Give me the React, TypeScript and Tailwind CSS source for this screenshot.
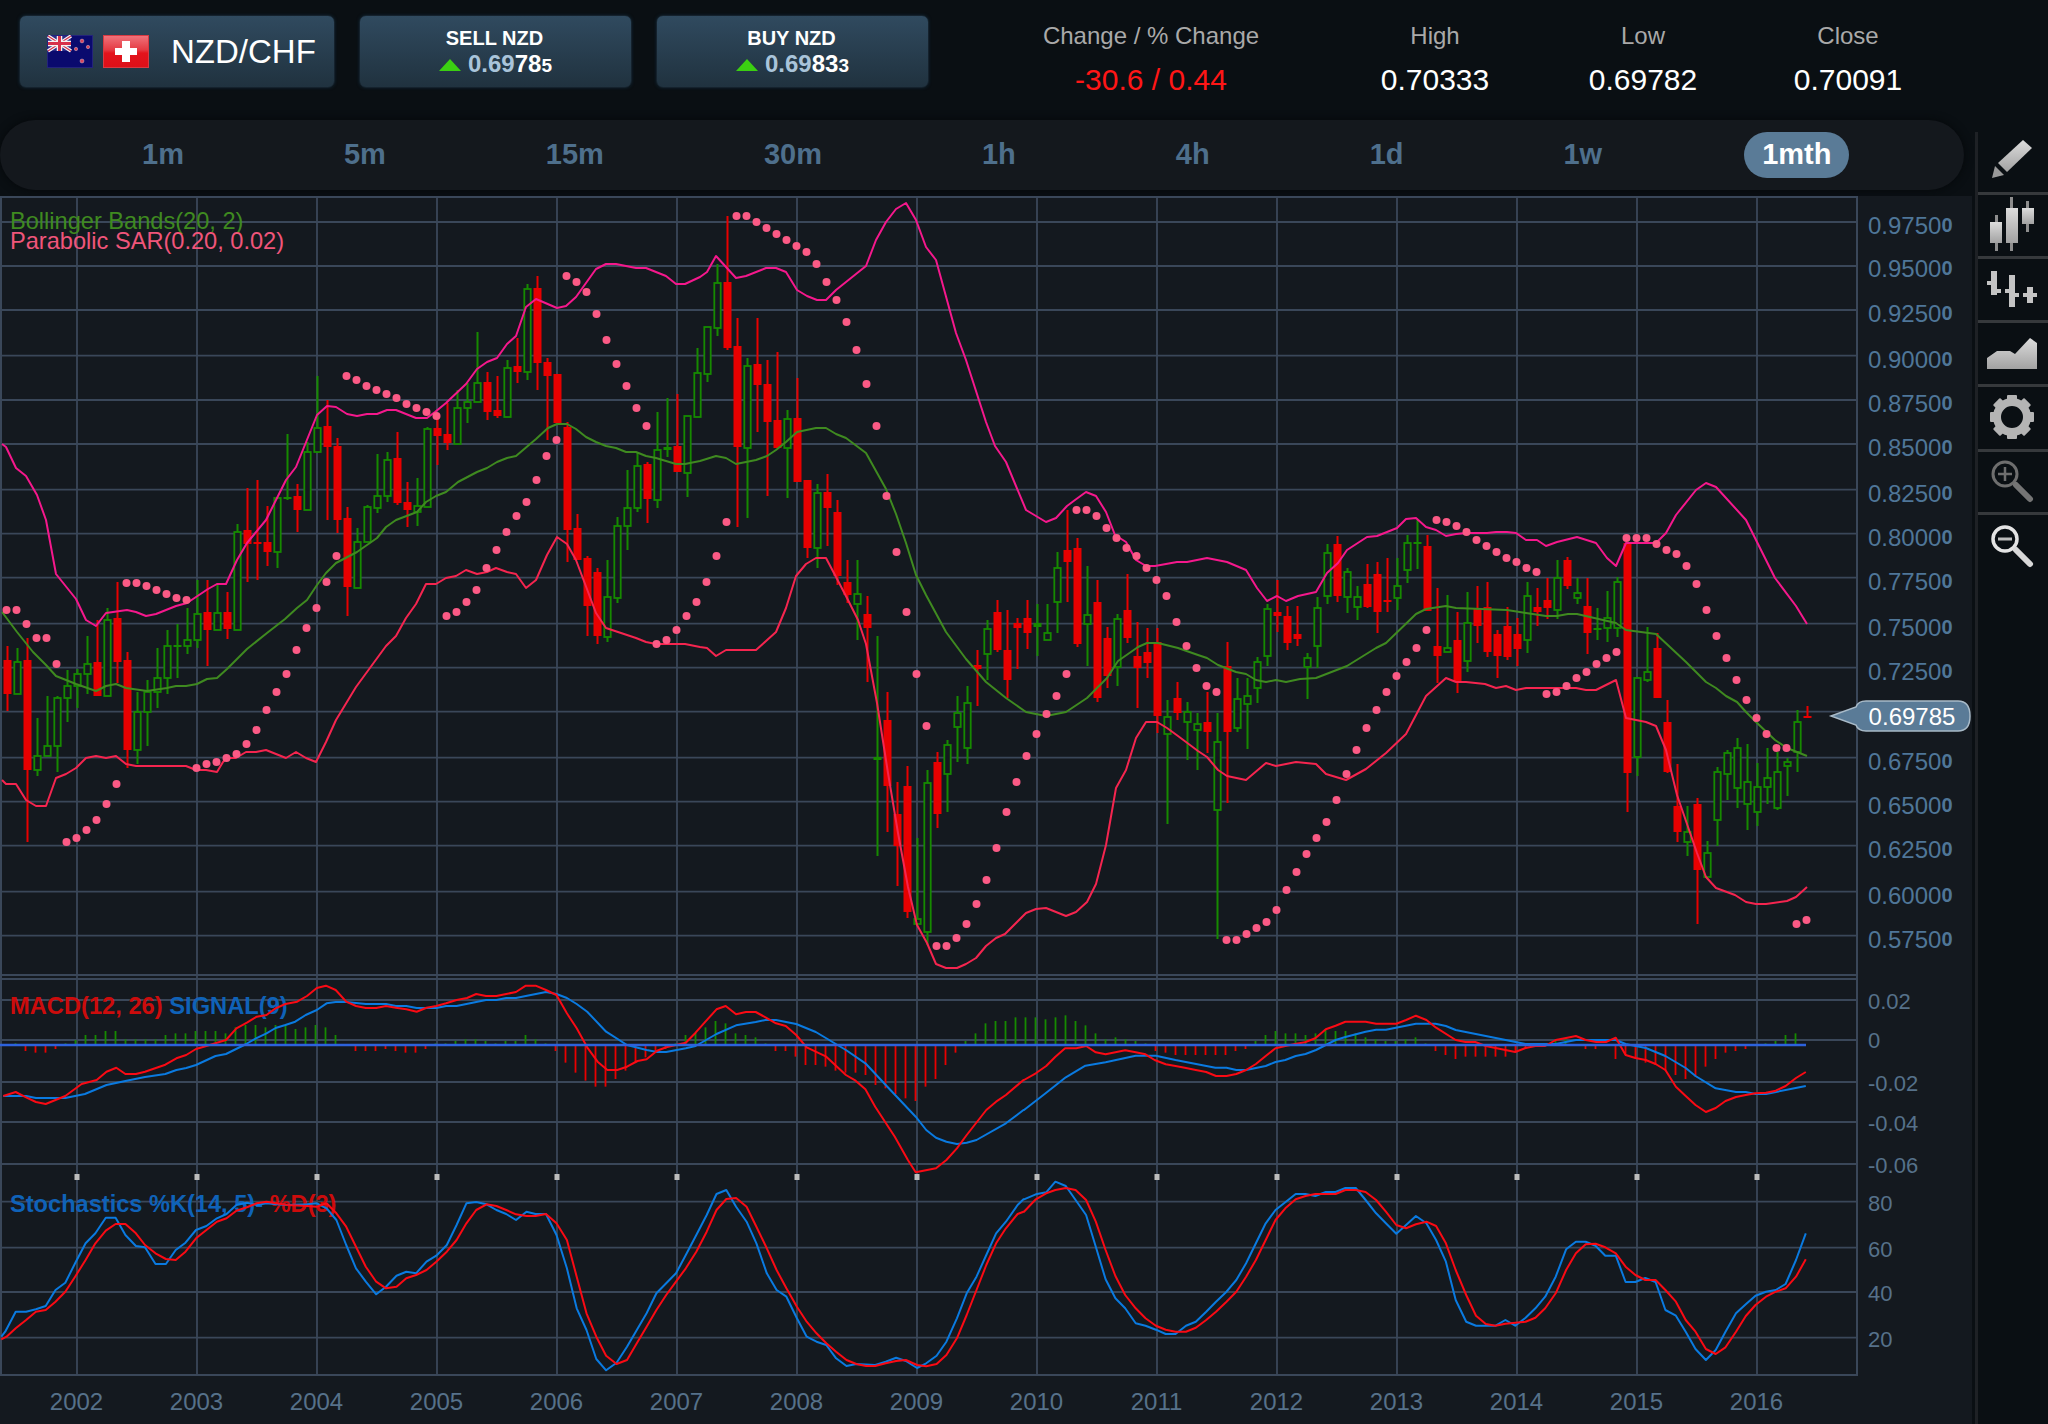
import React from "react";

type P = [number, number];
const r = 0, g = 1, dg = 2, dr = 3;
// type, wick top, body top, body bottom, wick bottom
const CANDLES: number[][] = [
[r,646,660,694,711],[g,648,662,694,694],[r,638,660,770,842],[g,718,756,770,776],[g,696,746,756,756],[g,696,698,746,772],[g,670,686,698,722],[g,669,674,686,708],[g,636,664,674,694],[r,620,662,696,696],
[g,608,620,696,696],[r,582,618,662,683],[r,652,660,750,768],[g,692,712,750,764],[g,680,692,712,746],[g,648,678,692,708],[g,630,646,678,694],[dg,624,645,647,678],[g,608,640,646,654],[g,580,614,640,648],
[r,580,612,630,666],[g,583,613,630,630],[r,592,612,629,639],[g,524,532,630,630],[r,488,530,544,582],[dr,480,542,544,580],[r,506,542,552,566],[g,498,498,552,568],[dg,434,497,499,500],[r,484,496,510,532],
[g,442,452,510,510],[g,376,428,452,453],[r,400,426,447,520],[r,438,446,520,533],[r,507,518,587,616],[g,528,542,588,588],[g,505,507,542,542],[g,454,496,508,513],[g,452,460,496,502],[r,432,458,503,505],
[r,482,502,510,527],[g,478,506,512,526],[g,427,429,507,507],[r,418,428,436,465],[r,403,434,443,450],[g,390,408,444,444],[g,383,402,408,423],[g,332,383,402,402],[r,372,382,412,420],[r,376,410,416,418],
[g,360,368,417,417],[r,338,366,372,383],[g,284,289,372,380],[r,276,288,363,390],[r,358,362,376,440],[r,374,374,423,423],[r,422,427,530,562],[r,514,528,560,560],[r,556,558,606,636],[r,568,572,636,644],
[g,560,597,637,642],[g,517,526,598,603],[g,470,508,526,550],[g,453,466,508,512],[r,462,464,499,523],[g,412,450,500,508],[dg,398,447,450,457],[r,394,446,472,472],[g,416,416,473,497],[g,348,373,417,417],
[g,327,327,374,382],[g,264,283,328,336],[r,216,282,348,350],[r,318,346,447,527],[g,358,366,448,518],[r,318,364,385,432],[r,360,384,422,496],[r,352,420,448,448],[g,410,419,448,498],[r,378,418,482,482],
[r,480,480,548,558],[g,484,493,548,568],[r,474,492,508,546],[r,500,512,576,585],[r,560,582,595,603],[g,560,594,604,640],[r,596,614,628,682],[dg,636,757,760,856],[r,692,720,786,832],[r,782,814,846,886],
[r,766,786,912,918],[g,838,919,924,924],[g,770,783,932,945],[r,752,762,814,828],[g,740,745,774,812],[g,696,713,727,762],[g,686,703,748,764],[dr,650,665,669,706],[g,620,629,654,680],[r,600,612,650,652],
[r,610,650,680,698],[dr,618,623,628,669],[r,600,618,633,649],[dg,604,623,627,656],[g,604,633,640,640],[g,552,568,602,633],[r,510,550,562,602],[r,538,548,644,647],[g,566,615,624,666],[r,580,602,698,702],
[r,627,638,676,688],[g,614,619,667,686],[r,574,610,638,643],[r,622,656,668,708],[r,628,652,663,678],[r,628,642,716,733],[g,700,717,734,824],[r,682,698,713,720],[g,702,712,722,760],[g,713,724,730,770],
[r,692,722,732,753],[g,713,742,810,939],[r,642,666,732,803],[g,678,699,728,732],[g,678,696,704,749],[g,657,662,688,703],[g,604,609,656,666],[dr,580,612,616,632],[r,606,616,643,650],[r,606,634,639,646],
[g,653,658,667,699],[g,597,608,646,668],[g,544,553,596,604],[r,536,544,596,602],[g,568,572,597,613],[g,586,597,607,620],[r,564,584,607,608],[r,562,574,612,633],[dr,558,600,602,612],[g,558,586,598,610],
[g,535,543,570,583],[dg,520,542,544,569],[r,535,546,611,611],[r,588,646,656,683],[g,595,648,652,652],[r,612,640,682,693],[g,592,623,661,672],[r,586,609,626,643],[r,582,607,652,657],[r,630,634,656,678],
[r,607,626,657,660],[r,618,634,649,666],[g,582,596,640,653],[r,588,607,612,626],[r,578,600,608,619],[g,560,578,610,619],[r,557,560,586,589],[g,578,593,598,604],[r,578,606,633,654],[dg,608,628,630,640],
[g,591,618,628,642],[g,577,582,628,637],[r,543,543,773,812],[g,677,678,757,776],[g,627,672,680,682],[r,633,648,698,698],[r,700,722,772,773],[r,764,806,832,842],[g,806,832,842,856],[r,798,804,870,924],
[g,841,853,877,877],[g,767,772,820,846],[g,750,753,774,800],[g,738,748,788,808],[g,744,782,804,830],[g,763,787,812,826],[g,748,778,787,804],[g,752,772,808,810],[g,758,762,766,796],[g,710,722,752,772],
[dr,706,716,718,718],
];

const SAR = [610,610,624,638,638,664,842,838,830,820,804,784,583,583,586,590,594,598,600,768,764,762,758,754,744,730,710,692,674,650,628,608,582,556,376,380,386,390,394,398,404,408,412,416,616,612,602,590,568,550,532,516,502,480,456,440,276,282,292,314,340,364,386,408,426,644,640,630,616,602,582,556,522,216,216,222,228,234,240,246,252,264,282,300,322,350,384,426,496,552,612,674,726,946,946,938,924,904,880,848,812,782,756,734,714,696,674,510,510,516,528,538,548,556,568,580,596,622,646,668,686,692,940,940,934,928,922,910,890,872,854,838,822,800,774,750,728,710,692,676,662,648,630,520,522,526,532,540,546,552,558,562,568,572,694,692,686,678,672,664,658,652,538,538,538,544,550,554,566,584,610,636,658,680,700,718,734,748,748,924,920];

const UPPER: P[] = [[2,444],[6,447],[16,468],[26,476],[37,495],[46,520],[56,574],[76,599],[86,620],[96,626],[106,613],[127,610],[136,612],[146,616],[156,614],[176,606],[187,603],[208,589],[217,584],[226,584],[237,560],[247,543],[266,520],[286,480],[296,467],[317,415],[327,406],[336,407],[347,414],[357,416],[367,414],[377,414],[387,410],[396,410],[416,418],[427,418],[435,412],[446,403],[466,384],[477,369],[487,362],[497,358],[507,344],[516,336],[526,307],[536,299],[557,308],[566,306],[576,297],[596,269],[606,264],[616,264],[636,268],[646,268],[666,276],[676,284],[685,284],[700,277],[707,272],[716,256],[736,278],[746,276],[766,268],[776,268],[786,272],[797,290],[807,296],[817,300],[826,300],[836,290],[866,266],[876,240],[886,222],[896,209],[906,203],[916,220],[926,247],[936,260],[956,333],[966,360],[986,422],[995,446],[1006,462],[1026,510],[1046,522],[1056,518],[1067,506],[1075,500],[1086,492],[1096,496],[1106,512],[1115,535],[1126,542],[1136,560],[1146,566],[1155,566],[1177,562],[1187,562],[1207,558],[1227,562],[1246,570],[1257,588],[1267,601],[1277,596],[1286,601],[1298,596],[1316,592],[1327,573],[1338,563],[1347,550],[1367,537],[1377,536],[1397,528],[1406,519],[1416,518],[1426,527],[1436,530],[1446,536],[1456,534],[1466,533],[1487,533],[1496,532],[1507,532],[1516,533],[1526,540],[1537,540],[1546,546],[1557,542],[1577,537],[1596,543],[1607,558],[1616,566],[1626,543],[1656,543],[1666,533],[1676,515],[1696,490],[1706,483],[1716,487],[1746,520],[1775,578],[1796,606],[1807,624]];

const MIDDLE: P[] = [[2,612],[17,632],[33,652],[46,665],[56,676],[76,684],[96,691],[106,686],[116,684],[126,688],[147,691],[167,688],[176,686],[186,686],[197,684],[207,679],[217,678],[227,669],[247,649],[267,633],[285,619],[297,608],[307,600],[317,585],[326,573],[336,563],[357,552],[377,538],[386,527],[396,520],[417,512],[426,502],[436,496],[446,492],[458,482],[477,472],[487,468],[497,462],[507,458],[516,456],[536,439],[548,428],[557,424],[567,424],[576,429],[586,437],[596,442],[606,446],[616,448],[626,452],[636,452],[646,456],[656,458],[676,464],[685,464],[700,461],[716,456],[726,458],[736,464],[756,460],[767,456],[776,450],[786,442],[797,432],[816,428],[826,428],[836,434],[846,438],[866,453],[876,471],[886,489],[896,514],[906,543],[916,575],[926,595],[946,632],[966,659],[986,682],[1006,698],[1026,712],[1046,716],[1066,712],[1087,698],[1107,678],[1118,661],[1138,647],[1147,643],[1158,643],[1178,648],[1198,655],[1207,658],[1218,665],[1236,672],[1246,674],[1256,680],[1266,682],[1276,680],[1286,682],[1300,679],[1316,678],[1347,666],[1376,648],[1386,643],[1416,614],[1426,609],[1446,606],[1456,608],[1507,610],[1526,613],[1546,616],[1557,616],[1568,614],[1577,614],[1616,623],[1626,630],[1656,634],[1686,662],[1706,682],[1716,688],[1726,696],[1737,702],[1746,712],[1756,722],[1775,740],[1787,748],[1807,756]];

const LOWER: P[] = [[2,780],[6,784],[16,784],[26,800],[36,806],[46,806],[56,778],[66,774],[76,768],[86,758],[96,756],[106,758],[116,756],[126,764],[136,766],[186,766],[196,770],[206,770],[217,772],[223,762],[227,758],[236,758],[246,752],[256,752],[266,750],[286,758],[296,752],[306,758],[316,762],[326,742],[336,720],[356,687],[386,646],[396,636],[406,618],[416,604],[426,584],[436,584],[446,578],[456,576],[466,570],[477,574],[487,572],[496,568],[507,572],[516,574],[526,588],[536,580],[547,555],[557,537],[567,544],[576,560],[596,613],[606,628],[636,638],[646,642],[656,644],[685,644],[700,647],[707,648],[716,656],[726,650],[756,650],[776,632],[786,608],[796,576],[806,564],[816,558],[826,558],[836,577],[848,600],[858,620],[866,644],[877,703],[888,773],[898,833],[908,887],[917,925],[927,943],[936,964],[946,968],[957,968],[966,964],[976,958],[986,946],[996,938],[1005,934],[1026,913],[1036,909],[1046,908],[1066,916],[1076,912],[1087,902],[1096,884],[1106,845],[1116,788],[1126,770],[1136,738],[1146,722],[1157,722],[1167,728],[1178,736],[1198,751],[1207,757],[1218,770],[1227,776],[1246,780],[1266,763],[1276,766],[1296,762],[1316,764],[1326,774],[1346,780],[1366,769],[1386,753],[1406,734],[1426,696],[1446,678],[1456,682],[1466,682],[1485,684],[1496,688],[1506,686],[1516,690],[1526,688],[1576,688],[1586,690],[1596,690],[1616,680],[1626,718],[1646,722],[1656,726],[1666,750],[1677,795],[1697,853],[1706,877],[1716,888],[1735,895],[1746,902],[1756,904],[1766,904],[1787,901],[1796,897],[1807,887]];

const HIST = [258,250,273,278,278,267,250,240,225,225,213,213,238,238,238,238,225,220,220,213,213,213,220,202,195,195,202,195,195,207,202,195,202,225,258,273,273,273,267,273,278,278,267,250,250,243,238,238,243,250,243,243,225,238,250,273,308,338,362,380,380,357,332,308,292,278,267,250,225,218,202,183,190,220,225,232,250,273,273,290,315,315,320,332,338,338,345,375,385,402,415,423,380,357,315,278,243,220,190,183,183,172,172,172,178,172,166,183,196,220,238,232,238,243,250,273,278,285,285,285,285,285,285,273,267,243,225,213,220,220,225,220,207,213,213,220,232,238,243,243,238,232,250,273,285,297,290,290,290,290,290,273,267,250,250,243,238,258,267,267,258,297,285,297,308,315,332,345,357,350,320,297,278,273,267,258,250,243,225,220];

const z7 = (a: P[]): P[] => a.map(([x, y]) => [x / 1.531, 960 + y / 3]);
const z8 = (a: P[]): P[] => a.map(([x, y]) => [1024 + x / 1.531, 960 + y / 3]);

const MACD: P[] = [...z7([[5,408],[24,396],[40,412],[55,426],[70,432],[85,420],[100,408],[125,372],[148,360],[163,335],[178,323],[192,342],[208,342],[222,335],[253,314],[270,295],[285,285],[300,267],[316,258],[346,240],[362,205],[378,188],[393,170],[408,165],[422,145],[437,132],[455,125],[470,108],[485,84],[499,77],[514,90],[530,125],[545,138],[560,144],[576,144],[591,138],[606,143],[622,148],[638,155],[653,143],[668,138],[683,130],[699,120],[715,114],[729,102],[744,108],[760,108],[775,102],[790,96],[805,77],[820,77],[836,90],[852,105],[868,160],[883,205],[899,262],[915,305],[930,330],[945,330],[960,320],[976,303],[990,298],[1006,272],[1020,262],[1050,248],[1065,218],[1080,185],[1097,148],[1111,138],[1127,163],[1142,156],[1157,156],[1172,172],[1188,190],[1203,198],[1219,225],[1235,262],[1265,290],[1295,345],[1310,362],[1325,388],[1340,440],[1370,530],[1390,600],[1402,637],[1433,625],[1449,600],[1465,565],[1480,525],[1510,450],[1525,425],[1540,405],[1567,360]]),
...z8([[0,360],[18,340],[34,318],[48,290],[63,265],[80,265],[95,258],[110,277],[125,283],[140,277],[155,271],[171,277],[186,283],[200,300],[217,313],[232,318],[248,324],[263,330],[279,336],[294,348],[310,348],[325,342],[340,330],[355,312],[370,288],[385,265],[400,258],[415,252],[430,247],[446,235],[462,208],[477,197],[492,185],[523,185],[539,191],[570,191],[585,180],[600,167],[616,180],[631,203],[661,240],[676,246],[691,246],[707,258],[722,264],[737,270],[752,276],[768,264],[783,258],[798,258],[814,240],[830,234],[845,228],[860,240],[876,246],[891,246],[906,233],[921,285],[936,294],[952,300],[967,312],[982,330],[998,380],[1013,408],[1028,435],[1044,456],[1059,444],[1074,423],[1090,411],[1105,405],[1120,400],[1136,398],[1151,392],[1166,378],[1182,354],[1197,336]])];

const SIGNAL: P[] = [...z7([[5,408],[40,408],[55,414],[100,414],[130,402],[163,375],[192,363],[222,351],[253,342],[270,330],[285,324],[300,315],[330,288],[346,282],[377,252],[392,235],[408,220],[422,204],[437,195],[452,185],[468,165],[485,150],[500,130],[514,126],[530,126],[560,132],[591,132],[606,138],[622,138],[638,144],[668,144],[683,138],[699,138],[729,126],[744,120],[760,120],[775,114],[790,114],[805,108],[836,96],[852,102],[868,114],[883,132],[899,155],[928,215],[960,255],[990,270],[1006,276],[1020,276],[1050,265],[1065,258],[1097,222],[1127,196],[1157,186],[1172,180],[1188,180],[1219,192],[1249,216],[1295,270],[1325,310],[1356,375],[1402,470],[1418,510],[1433,533],[1449,545],[1465,552],[1480,548],[1495,540],[1540,490],[1567,450]]),
...z8([[0,450],[33,400],[64,352],[94,317],[125,307],[171,287],[202,287],[232,300],[293,323],[310,323],[325,330],[340,330],[370,318],[385,306],[400,300],[416,288],[431,282],[447,270],[477,240],[492,231],[523,215],[539,209],[554,209],[600,191],[630,191],[646,198],[661,210],[707,228],[768,252],[814,252],[845,240],[906,240],[921,252],[952,264],[982,288],[1013,324],[1028,348],[1059,385],[1090,396],[1105,396],[1120,402],[1136,402],[1197,378]])];

const STOCH_K: P[] = [...z7([[2,1130],[8,1115],[24,1055],[40,1055],[55,1048],[70,1038],[85,990],[100,968],[115,910],[131,850],[146,820],[162,773],[177,773],[192,825],[208,858],[222,862],[238,912],[254,912],[269,870],[284,848],[300,810],[316,798],[332,775],[347,762],[362,735],[378,728],[393,735],[408,730],[424,733],[440,735],[470,733],[485,730],[500,745],[515,780],[530,855],[545,925],[560,965],[576,1003],[591,980],[607,947],[622,935],[637,940],[653,905],[668,887],[684,855],[699,795],[714,730],[729,726],[745,733],[760,750],[775,762],[790,780],[806,755],[820,762],[836,762],[852,825],[868,925],[883,1045],[898,1110],[913,1197],[928,1231],[944,1208],[960,1160],[975,1110],[990,1060],[1005,1000],[1020,970],[1035,940],[1050,885],[1066,825],[1082,765],[1097,702],[1112,690],[1127,740],[1143,785],[1158,850],[1174,940],[1189,990],[1204,1010],[1220,1075],[1235,1130],[1250,1145],[1265,1155],[1280,1195],[1296,1218],[1311,1212],[1340,1215],[1356,1205],[1372,1193],[1387,1203],[1404,1224],[1418,1210],[1434,1187],[1449,1145],[1465,1075],[1480,1000],[1495,950],[1510,885],[1525,820],[1540,785],[1558,735],[1567,718]]),
...z8([[0,718],[18,703],[34,697],[48,665],[64,678],[79,720],[95,765],[110,860],[125,958],[140,1015],[155,1045],[171,1090],[186,1097],[202,1109],[217,1122],[232,1122],[248,1097],[263,1085],[279,1055],[294,1025],[310,995],[325,960],[340,910],[355,850],[370,790],[385,750],[400,727],[416,702],[431,702],[446,708],[462,696],[477,696],[492,684],[508,684],[523,720],[539,760],[554,790],[570,821],[585,795],[600,768],[616,790],[631,840],[646,905],[661,1020],[677,1085],[692,1097],[722,1097],[737,1080],[752,1097],[768,1073],[783,1045],[798,1010],[814,950],[830,868],[845,845],[860,845],[875,857],[890,887],[906,887],[921,966],[936,966],[951,954],[967,966],[982,1050],[998,1067],[1013,1115],[1028,1167],[1044,1200],[1059,1170],[1074,1115],[1090,1060],[1105,1033],[1120,1007],[1136,995],[1151,990],[1166,972],[1182,900],[1197,820]])];

const STOCH_D: P[] = [...z7([[2,1138],[10,1130],[24,1105],[40,1080],[55,1055],[70,1050],[85,1025],[100,995],[115,950],[131,900],[146,850],[162,812],[177,792],[192,792],[208,820],[222,855],[238,880],[254,897],[269,900],[284,875],[300,835],[316,810],[332,785],[347,775],[362,752],[378,742],[393,730],[408,725],[440,735],[470,738],[485,740],[500,730],[515,760],[530,800],[545,860],[560,920],[576,965],[591,985],[607,980],[622,955],[637,945],[653,930],[668,905],[684,875],[699,840],[714,790],[729,750],[745,733],[760,738],[775,750],[790,763],[806,768],[820,768],[836,762],[852,790],[868,840],[883,950],[898,1060],[913,1130],[928,1187],[944,1212],[960,1200],[975,1150],[990,1100],[1005,1050],[1020,1005],[1035,965],[1050,925],[1066,875],[1082,815],[1097,750],[1112,717],[1127,714],[1143,740],[1158,800],[1174,865],[1189,930],[1204,985],[1220,1040],[1235,1085],[1250,1120],[1265,1150],[1280,1175],[1296,1200],[1311,1212],[1326,1218],[1340,1218],[1356,1210],[1372,1203],[1387,1200],[1404,1215],[1418,1219],[1434,1212],[1449,1185],[1465,1135],[1480,1065],[1495,990],[1510,915],[1525,850],[1540,805],[1558,762],[1567,755]]),
...z8([[0,755],[18,718],[34,700],[48,690],[64,684],[79,690],[95,720],[110,785],[125,870],[140,948],[155,1005],[171,1045],[186,1075],[202,1097],[217,1109],[232,1115],[248,1115],[263,1103],[279,1080],[294,1055],[310,1025],[325,995],[340,950],[355,900],[370,840],[385,780],[400,745],[416,718],[431,708],[446,702],[477,702],[492,690],[508,690],[523,696],[539,720],[554,755],[570,795],[585,805],[600,793],[616,785],[631,798],[646,850],[661,930],[677,1005],[692,1067],[707,1092],[722,1097],[737,1091],[768,1085],[783,1073],[798,1045],[814,1000],[830,930],[845,880],[860,853],[875,851],[890,862],[906,880],[921,920],[936,945],[951,960],[967,960],[982,990],[998,1025],[1013,1080],[1028,1115],[1044,1167],[1059,1182],[1074,1162],[1090,1115],[1105,1068],[1120,1035],[1136,1010],[1151,995],[1166,985],[1182,950],[1197,898]])];

const HLINES = [222,266,310,355.7,400,444,489.7,533.7,577.7,623.7,667.7,711.7,757.7,801.7,845.7,891.7,935.7,975,979,1000,1040,1082,1122,1164,1201.7,1247.7,1292,1337.7];
const YEARS = Array.from({ length: 15 }, (_, k) => ({ year: 2002 + k, x: 77 + 120 * k }));
const PRICES: [string, number][] = [["0.9750",225],["0.9500",268],["0.9250",313],["0.9000",359],["0.8750",403],["0.8500",447],["0.8250",493],["0.8000",537],["0.7750",581],["0.7500",627],["0.7250",671],["0.6750",761],["0.6500",805],["0.6250",849],["0.6000",895],["0.5750",939]];
const SIDE: [string, number][] = [["0.02",1001],["0",1040],["-0.02",1083],["-0.04",1123],["-0.06",1165],["80",1203],["60",1249],["40",1293],["20",1339]];

const pts = (a: P[]) => a.map(([x, y]) => `${x.toFixed(1)},${y.toFixed(1)}`).join(" ");
const RED = "#e80000";
const GREEN = "#168a00";

function Candle({ c, i }: { c: number[]; i: number }) {
  const [t, wt, bt, bb, wb] = c;
  const x = 7.5 + 10 * i;
  const isRed = t === r || t === dr;
  const col = isRed ? RED : GREEN;
  return (
    <g>
      <line x1={x} x2={x} y1={wt} y2={wb} stroke={col} strokeWidth={2} />
      {t === g ? (
        <rect x={x - 3.2} y={bt} width={6.4} height={bb - bt} fill="#14191f" stroke={col} strokeWidth={1.8} />
      ) : (
        <rect x={x - 4} y={bt} width={8} height={Math.max(bb - bt, 2)} fill={col} />
      )}
    </g>
  );
}

function PriceChart() {
  return (
    <svg viewBox="0 196 1972 1228" className="block h-[1228px] w-[1972px] bg-[#14191f]">
      <g stroke="#3a4759" strokeWidth={1.8}>
        {HLINES.map((y) => <line key={y} x1={0} x2={1857} y1={y} y2={y} />)}
        {YEARS.map((v) => <line key={v.x} x1={v.x} x2={v.x} y1={196} y2={1375} />)}
        <rect x={1} y={197} width={1856} height={1178} fill="none" strokeWidth={2} />
      </g>

      <text x={10} y={221} fontSize={23.6} fill="#3f8a20" dominantBaseline="central">Bollinger Bands(20, 2)</text>
      <text x={10} y={241} fontSize={23.6} fill="#f0557a" dominantBaseline="central">Parabolic SAR(0.20, 0.02)</text>
      <text x={10} y={1006} fontSize={23.7} fontWeight={700} dominantBaseline="central">
        <tspan fill="#cc0c0c">MACD(12, 26) </tspan>
        <tspan fill="#0f62b8">SIGNAL(9)</tspan>
      </text>
      <text x={10} y={1204} fontSize={23.6} fontWeight={700} dominantBaseline="central">
        <tspan fill="#0f62b8">Stochastics %K(14, 5)- </tspan>
        <tspan fill="#cc0c0c">%D(3)</tspan>
      </text>

      {CANDLES.map((c, i) => <Candle key={i} c={c} i={i} />)}

      <g fill="none" strokeWidth={2} strokeLinejoin="round">
        <polyline points={pts(UPPER)} stroke="#f5188c" />
        <polyline points={pts(MIDDLE)} stroke="#3f8a20" />
        <polyline points={pts(LOWER)} stroke="#f5254f" />
      </g>
      {SAR.map((y, k) => <ellipse key={k} cx={6.5 + 10 * k} cy={y} rx={4} ry={4} fill="#fb5a85" />)}

      {HIST.map((z, i) => {
        const y = 960 + z / 3;
        if (z === 258) return null;
        return <line key={i} x1={5.5 + 10 * i} x2={5.5 + 10 * i} y1={1045} y2={y} stroke={z < 258 ? GREEN : RED} strokeWidth={1.8} />;
      })}
      <g fill="none" strokeWidth={2} strokeLinejoin="round">
        <polyline points={pts(SIGNAL)} stroke="#0a7ae0" />
        <polyline points={pts(MACD)} stroke="#fa0a14" />
        <line x1={0} x2={1806} y1={1045} y2={1045} stroke="#2d62dc" strokeWidth={2.6} />
        <polyline points={pts(STOCH_K)} stroke="#0a7ae0" />
        <polyline points={pts(STOCH_D)} stroke="#fa0a14" />
      </g>
      {YEARS.map((v) => <rect key={v.year} x={v.x - 2.5} y={1174} width={5} height={6} fill="#bdbdbd" />)}

      {PRICES.map(([p, y]) => (
        <text key={p} x={1868} y={y} fontSize={24} fill="#4f7698" dominantBaseline="central">
          {p}<tspan fontSize={20} fontWeight={700}>0</tspan>
        </text>
      ))}
      {SIDE.map(([p, y]) => (
        <text key={p} x={1868} y={y} fontSize={22} fill="#56718a" dominantBaseline="central">{p}</text>
      ))}
      {YEARS.map((v) => (
        <text key={v.year} x={v.x - 0.5} y={1401} fontSize={24} fill="#56718a" textAnchor="middle" dominantBaseline="central">{v.year}</text>
      ))}

      <path d="M1831 716 L1856 707 Q1858 701 1866 701 L1958 701 Q1970 701 1970 716 Q1970 731 1958 731 L1866 731 Q1858 731 1856 725 Z" fill="#5a7b97" stroke="#a8bac8" strokeWidth={1.5} />
      <text x={1912} y={716} fontSize={24} fill="#ffffff" textAnchor="middle" dominantBaseline="central">0.69785</text>
    </svg>
  );
}

function NzFlag() {
  return (
    <svg viewBox="0 0 46 33" className="h-[33px] w-[46px] shrink-0">
      <rect x={0.5} y={0.5} width={45} height={32} fill="#0a0a6e" stroke="#23237c" />
      <g>
        <rect x={1} y={1} width={23} height={15} fill="#2b2b86" />
        <path d="M1 1 L24 16 M24 1 L1 16" stroke="#f4f4f4" strokeWidth={3.5} />
        <path d="M1 1 L24 16 M24 1 L1 16" stroke="#d7304a" strokeWidth={1.2} />
        <path d="M12.5 1 V16 M1 8.5 H24" stroke="#f4f4f4" strokeWidth={5.5} />
        <path d="M12.5 1 V16 M1 8.5 H24" stroke="#d7304a" strokeWidth={3} />
      </g>
      <g fill="#d9445f" stroke="#ddd" strokeWidth={0.4}>
        <circle cx={35} cy={6} r={1.9} />
        <circle cx={29} cy={14} r={1.7} />
        <circle cx={41} cy={12} r={1.7} />
        <circle cx={35} cy={26} r={2} />
      </g>
    </svg>
  );
}

function ChFlag() {
  return (
    <svg viewBox="0 0 46 33" className="h-[33px] w-[46px] shrink-0">
      <defs>
        <linearGradient id="chf" x1="0" y1="0" x2="0" y2="1">
          <stop offset="0" stopColor="#f0747c" />
          <stop offset="0.45" stopColor="#e53a42" />
          <stop offset="0.55" stopColor="#e3141c" />
          <stop offset="1" stopColor="#dd0f18" />
        </linearGradient>
      </defs>
      <rect x={0.5} y={0.5} width={45} height={32} fill="url(#chf)" stroke="#d83a42" />
      <path d="M19 6 H27 V13 H34 V20 H27 V27 H19 V20 H12 V13 H19 Z" fill="#ffffff" />
    </svg>
  );
}

function Triangle() {
  return (
    <svg viewBox="0 0 22 12" className="h-[12px] w-[22px] shrink-0">
      <path d="M11 0 L22 12 H0 Z" fill="#3bcf12" />
    </svg>
  );
}

function Quote({ title, dim, big, small }: { title: string; dim: string; big: string; small: string }) {
  return (
    <div className="flex h-[73px] w-[273px] flex-col items-center justify-center rounded-[7px] border border-[#15222d] bg-linear-to-b from-[#304a5f] to-[#20323f] shadow-[0_0_3px_#0f2433]">
      <div className="-ml-[2px] text-[20px] leading-[26px] font-bold text-white">{title}</div>
      <div className="flex items-center gap-[7px] leading-[26px] font-bold">
        <Triangle />
        <span className="text-[24px] text-[#a9c4da]">
          {dim}
          <span className="text-white">{big}</span>
          <span className="text-[19px] text-white">{small}</span>
        </span>
      </div>
    </div>
  );
}

function Stat({ label, value, valueClass, ml }: { label: string; value: string; valueClass: string; ml: string }) {
  return (
    <div className={`flex w-[160px] flex-col items-center whitespace-nowrap ${ml}`}>
      <div className="text-[24px] leading-[28px] text-[#a9a9a9]">{label}</div>
      <div className={`mt-[13px] text-[30px] leading-[34px] ${valueClass}`}>{value}</div>
    </div>
  );
}

function Frame({ label, active }: { label: string; active?: boolean }) {
  return (
    <div className={`flex h-[46px] items-center rounded-full px-[18px] text-[29px] font-bold ${active ? "bg-[#5a7b97] text-white" : "text-[#4e6f8c]"}`}>
      {label}
    </div>
  );
}

const FRAMES = ["1m", "5m", "15m", "30m", "1h", "4h", "1d", "1w"];

function Grad({ id }: { id: string }) {
  return (
    <defs>
      <linearGradient id={id} x1="0" y1="0" x2="0" y2="1">
        <stop offset="0" stopColor="#dcdcdc" />
        <stop offset="1" stopColor="#a2a2a2" />
      </linearGradient>
    </defs>
  );
}

function SideIcons() {
  const row = "flex w-full flex-col border-b-[3px] border-[#36393c]";
  return (
    <div className="mt-[12px] flex w-[73px] flex-col border-l-[3px] border-[#1e2125]">
      <div className={row}>
        <svg viewBox="1978 132 70 60" className="block h-[60px] w-[70px]">
          <Grad id="i1" />
          <path d="M2023 140 L2032 148 L2007 172 L1998 163 Z" fill="url(#i1)" />
          <path d="M1992 178 L1995 166 L2004 175 Z" fill="#9a9a9a" />
        </svg>
      </div>
      <div className={row}>
        <svg viewBox="1978 195 70 61" className="block h-[61px] w-[70px]">
          <Grad id="i2" />
          <g fill="#8d8d8d">
            <rect x={1995} y={215} width={3} height={36} />
            <rect x={2010} y={197} width={3} height={54} />
            <rect x={2026} y={201} width={3} height={31} />
          </g>
          <g fill="url(#i2)">
            <rect x={1990} y={222} width={12} height={21} />
            <rect x={2006} y={208} width={12} height={35} />
            <rect x={2022} y={208} width={12} height={16} />
          </g>
        </svg>
      </div>
      <div className={row}>
        <svg viewBox="1978 258 70 61" className="block h-[61px] w-[70px]">
          <g fill="#c4c4c4">
            <rect x={1991} y={270} width={6} height={24} />
            <rect x={1987} y={280} width={4} height={4} />
            <rect x={1997} y={288} width={4} height={4} />
            <rect x={2009} y={274} width={6} height={32} />
            <rect x={2005} y={288} width={4} height={4} />
            <rect x={2015} y={292} width={4} height={4} />
            <rect x={2027} y={286} width={6} height={16} />
            <rect x={2023} y={292} width={14} height={4} />
          </g>
        </svg>
      </div>
      <div className={row}>
        <svg viewBox="1978 322 70 61" className="block h-[61px] w-[70px]">
          <Grad id="i4" />
          <path d="M1987 368 L1987 357 L1997 350 L2010 350 L2015 353 L2030 337 L2037 342 L2037 368 Z" fill="url(#i4)" />
        </svg>
      </div>
      <div className={row}>
        <svg viewBox="1978 386 70 62" className="block h-[62px] w-[70px]">
          <g fill="#b4b4b4">
            {[0, 45, 90, 135, 180, 225, 270, 315].map((a) => (
              <rect key={a} x={2007} y={394} width={10} height={8} rx={1} transform={`rotate(${a} 2012 416)`} />
            ))}
          </g>
          <circle cx={2012} cy={416} r={15} fill="none" stroke="#b4b4b4" strokeWidth={8} />
        </svg>
      </div>
      <div className={row}>
        <svg viewBox="1978 451 70 60" className="block h-[60px] w-[70px]">
          <circle cx={2005} cy={473} r={12} fill="none" stroke="#6e6e6e" strokeWidth={3} />
          <path d="M2005 466 V480 M1998 473 H2012" stroke="#6e6e6e" strokeWidth={2.5} />
          <path d="M2016 484 L2030 498" stroke="#757575" strokeWidth={6} strokeLinecap="round" />
        </svg>
      </div>
      <div className="flex w-full flex-col">
        <svg viewBox="1978 514 70 61" className="block h-[61px] w-[70px]">
          <circle cx={2005} cy={538} r={12} fill="none" stroke="#e4e4e4" strokeWidth={3.5} />
          <path d="M1998 538 H2012" stroke="#bdbdbd" strokeWidth={3} />
          <path d="M2016 549 L2030 563" stroke="#d8d8d8" strokeWidth={6} strokeLinecap="round" />
        </svg>
      </div>
    </div>
  );
}

export default function App() {
  return (
    <div className="flex h-[1424px] w-[2048px] flex-col overflow-hidden bg-[#0a0f13] font-[Liberation_Sans,Arial,sans-serif]">
      <div className="flex h-[120px] shrink-0 pt-[15px] pl-[19px]">
        <div className="flex h-[73px] w-[316px] items-center rounded-[7px] border border-[#15222d] bg-linear-to-b from-[#304a5f] to-[#20323f] pl-[27px] shadow-[0_0_3px_#0f2433]">
          <NzFlag />
          <div className="ml-[10px]"><ChFlag /></div>
          <div className="ml-[22px] text-[33px] text-white">NZD/CHF</div>
        </div>
        <div className="ml-[24px]"><Quote title="SELL NZD" dim="0.69" big="78" small="5" /></div>
        <div className="ml-[24px]"><Quote title="BUY NZD" dim="0.69" big="83" small="3" /></div>
        <div className="flex pt-[7px]">
          <Stat ml="ml-[142px]" label="Change / % Change" value="-30.6 / 0.44" valueClass="text-[#ff1616]" />
          <Stat ml="ml-[124px]" label="High" value="0.70333" valueClass="text-white" />
          <Stat ml="ml-[48px]" label="Low" value="0.69782" valueClass="text-white" />
          <Stat ml="ml-[45px]" label="Close" value="0.70091" valueClass="text-white" />
        </div>
      </div>
      <div className="flex flex-1">
        <div className="flex w-[1975px] shrink-0 flex-col">
          <div className="flex h-[70px] w-[1964px] items-center gap-[124px] rounded-full bg-[#14181d] pl-[124px] shadow-[0_0_8px_#05080a]">
            {FRAMES.map((f) => <Frame key={f} label={f} />)}
            <Frame label="1mth" active />
          </div>
          <div className="mt-[6px]"><PriceChart /></div>
        </div>
        <SideIcons />
      </div>
    </div>
  );
}
